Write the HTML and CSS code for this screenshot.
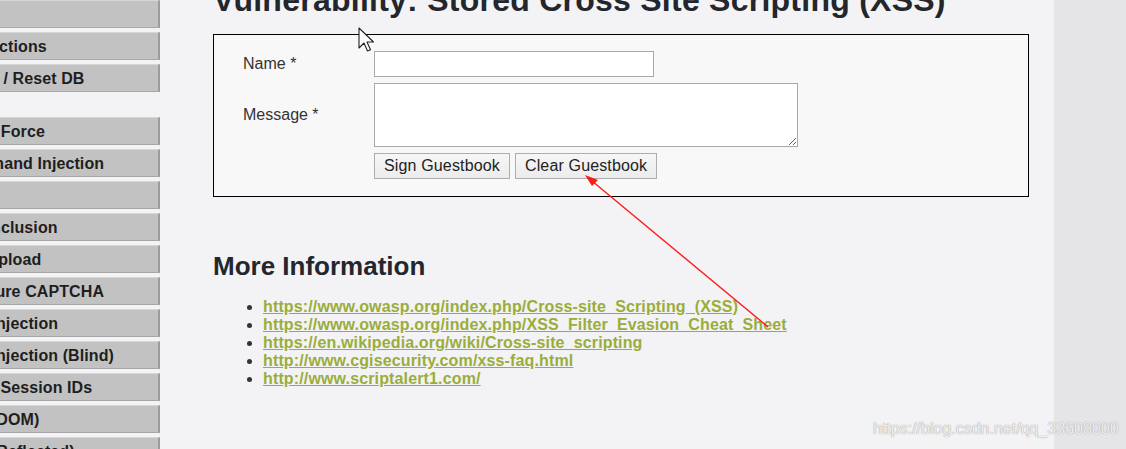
FILE: index.html
```html
<!DOCTYPE html>
<html>
<head>
    <meta charset="UTF-8">
    <title>DVWA - Stored XSS</title>
    <link rel="stylesheet" href="styles.css">
</head>
<body>
    <div class="page">
        <div class="layout">
            <div class="menu">
                <ul class="menu-group">
                    <li><a href="#">Home</a></li>
                    <li><a href="#">Instructions</a></li>
                    <li><a href="#">Setup / Reset DB</a></li>
                </ul>
                <ul class="menu-group">
                    <li><a href="#">Brute Force</a></li>
                    <li><a href="#">Command Injection</a></li>
                    <li><a href="#">CSRF</a></li>
                    <li><a href="#">File Inclusion</a></li>
                    <li><a href="#">File Upload</a></li>
                    <li><a href="#">Insecure CAPTCHA</a></li>
                    <li><a href="#">SQL Injection</a></li>
                    <li><a href="#">SQL Injection (Blind)</a></li>
                    <li><a href="#">Weak Session IDs</a></li>
                    <li><a href="#">XSS (DOM)</a></li>
                    <li><a href="#">XSS (Reflected)</a></li>
                    <li><a href="#">XSS (Stored)</a></li>
                </ul>
            </div>

            <div class="main">
                <h1>Vulnerability: Stored Cross Site Scripting (XSS)</h1>

                <div class="vulnerable-code">
                    <form class="guestbook">
                        <label class="form-label">Name *</label>
                        <input type="text" class="name-input" maxlength="10">
                        <label class="form-label">Message *</label>
                        <textarea class="message-input"></textarea>
                        <div class="buttons-container">
                            <button type="button">Sign Guestbook</button>
                            <button type="button">Clear Guestbook</button>
                        </div>
                    </form>
                </div>

                <h2>More Information</h2>
                <ul class="links">
                    <li><a href="#">https://www.owasp.org/index.php/Cross-site_Scripting_(XSS)</a></li>
                    <li><a href="#">https://www.owasp.org/index.php/XSS_Filter_Evasion_Cheat_Sheet</a></li>
                    <li><a href="#">https://en.wikipedia.org/wiki/Cross-site_scripting</a></li>
                    <li><a href="#">http://www.cgisecurity.com/xss-faq.html</a></li>
                    <li><a href="#">http://www.scriptalert1.com/</a></li>
                </ul>
            </div>
        </div>

        <div class="gutter"></div>

        <!-- annotation arrow drawn over the page -->
        <svg class="arrow" width="1126" height="449" viewBox="0 0 1126 449">
            <line x1="768" y1="327" x2="592" y2="181" stroke="#ff1a1a" stroke-width="1.4"/>
            <polygon points="585,175 598,180 592,186" fill="#ff1a1a"/>
        </svg>

        <svg class="cursor" width="18" height="28" viewBox="0 0 18 28">
            <path d="M1 1 L1 21 L6 16 L9.5 24 L12.5 22.7 L9 15 L15.5 15 Z" fill="#fff" stroke="#222" stroke-width="1.1" stroke-linejoin="round"/>
        </svg>

        <div class="watermark">https://blog.csdn.net/qq_33608000</div>
    </div>
</body>
</html>
```

FILE: styles.css
```css
* {
    margin: 0;
    padding: 0;
    box-sizing: border-box;
}

body {
    width: 1126px;
    height: 449px;
    overflow: hidden;
    background-color: #f3f3f5;
    font-family: "Liberation Sans", Arial, sans-serif;
    color: #222;
}

.page {
    position: relative;
    display: flex;
    height: 449px;
}

.layout {
    flex: 1;
    display: flex;
    gap: 53px;
}

/* left menu, scrolled partly out of view */
.menu {
    width: 214px;
    margin-left: -54px;
    flex-shrink: 0;
}

.menu-group {
    list-style: none;
    display: flex;
    flex-direction: column;
    gap: 4px;
}

.menu-group + .menu-group {
    margin-top: 25px;
}

.menu-group li a {
    display: block;
    height: 28px;
    line-height: 27px;
    padding-left: 7px;
    background-color: #c2c2c2;
    border-top: 1px solid #d6d6d6;
    border-left: 1px solid #d6d6d6;
    border-right: 2px solid #9c9c9c;
    border-bottom: 1px solid #a8a8a8;
    color: #1e1e1e;
    font-size: 16px;
    font-weight: bold;
    letter-spacing: 0.1px;
    text-decoration: none;
    white-space: nowrap;
}

.main {
    width: 816px;
}

h1 {
    margin-top: -18px;
    margin-bottom: 15px;
    font-size: 32px;
    font-weight: bold;
    letter-spacing: 0.25px;
    color: #23262d;
    white-space: nowrap;
}

.vulnerable-code {
    border: 1px solid #000;
    background-color: #f8f8f9;
    padding: 16px 29px 17px;
}

.guestbook {
    display: grid;
    grid-template-columns: 131px auto;
    row-gap: 6px;
    justify-items: start;
    align-items: center;
}

.form-label {
    font-size: 16px;
    color: #333;
}

.name-input {
    width: 280px;
    height: 26px;
    border: 1px solid #a9a9a9;
    background: #fff;
}

.message-input {
    width: 424px;
    height: 64px;
    border: 1px solid #a9a9a9;
    background: #fff;
}

.buttons-container {
    grid-column: 2;
    display: flex;
    gap: 5px;
}

button {
    height: 26px;
    padding: 0 9px;
    font-family: "Liberation Sans", Arial, sans-serif;
    font-size: 16px;
    letter-spacing: 0.15px;
    color: #222;
    background: linear-gradient(#f6f6f6, #ececec);
    border: 1px solid #adadad;
    border-radius: 0;
}

h2 {
    margin-top: 54px;
    margin-bottom: 16px;
    font-size: 26px;
    font-weight: bold;
    color: #23262d;
}

.links {
    padding-left: 50px;
    font-size: 16px;
    color: #333;
}

.links a {
    color: #9aad3b;
    font-weight: bold;
    letter-spacing: 0.14px;
}

.gutter {
    width: 72px;
    flex-shrink: 0;
    background-color: #e5e5e7;
}

.arrow {
    position: absolute;
    left: 0;
    top: 0;
    pointer-events: none;
}

.cursor {
    position: absolute;
    left: 358px;
    top: 27px;
}

.watermark {
    position: absolute;
    left: 873px;
    top: 420px;
    font-size: 16px;
    color: rgba(255, 255, 255, 0.85);
    text-shadow: 0 0 1px #9a9a9a, 0 0 1px #b5b5b5;
    white-space: nowrap;
}
```
